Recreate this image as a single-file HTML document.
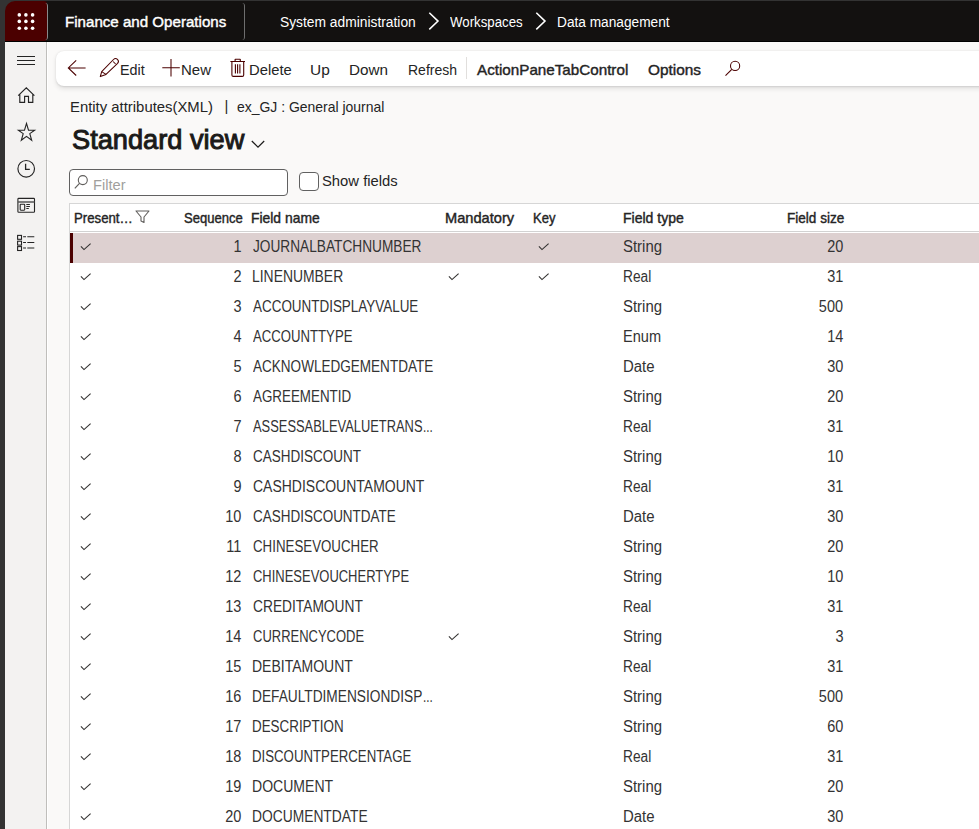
<!DOCTYPE html>
<html><head><meta charset="utf-8"><style>
*{box-sizing:border-box;margin:0;padding:0}
html,body{width:979px;height:829px;overflow:hidden;background:#faf9f8;font-family:"Liberation Sans",sans-serif;color:#242424}
.abs{position:absolute}
svg{position:absolute;overflow:visible}
.t{position:absolute;white-space:pre;line-height:1;transform-origin:0 0}
#frameL{left:0;top:0;width:5px;height:829px;background:#333333}
#frameT{left:0;top:0;width:979px;height:1px;background:#333333}
#hdr{left:5px;top:1px;width:974px;height:41px;background:#131110;border-bottom:1px solid #000}
#launch{left:5px;top:1px;width:42px;height:40px;background:#4b0000;border-radius:10px 3px 3px 0}
#nav{left:5px;top:42px;width:42px;height:787px;background:#f3f2f1;border-right:1px solid #bfbebb}
#ap{left:56px;top:51px;width:940px;height:35px;background:#fff;border-radius:8px;box-shadow:0 0.6px 1.8px rgba(0,0,0,0.10),0 2.4px 5px rgba(0,0,0,0.09)}
#grid{left:69px;top:203px;width:920px;height:640px;background:#fff;border-left:1px solid #d6d6d6;border-top:1px solid #d6d6d6}
#ghdr{left:70px;top:204px;width:909px;height:28px;border-bottom:1px solid #d2d2d2}
.row{position:absolute;left:70px;width:909px;height:30px}
.row.sel{background:#ddd0d0}
.row.sel:before{content:"";position:absolute;left:0;top:0;width:3px;height:30px;background:#4b0000}
.row .ck{top:10px}
.c{position:absolute;top:6.09px;font-size:15.6px;white-space:pre;line-height:1;color:#333;transform-origin:0 0}
.seq{right:737.5px;transform:scaleX(0.929);transform-origin:100% 0}
.fn{left:182.9px}
.ft{left:553.4px}
.fs{right:135.5px;transform:scaleX(0.929);transform-origin:100% 0}
</style></head><body>
<div class="abs" id="frameL"></div><div class="abs" id="frameT"></div><div class="abs" id="hdr"></div><div class="abs" style="left:5px;top:1px;width:12px;height:12px;background:#333"></div>
<div class="abs" id="launch"><svg width="42" height="40" style="left:0;top:0"><g fill="#fff">
<circle cx="14.3" cy="13.9" r="1.8"/><circle cx="20.9" cy="13.9" r="1.8"/><circle cx="27.6" cy="13.9" r="1.8"/>
<circle cx="14.3" cy="20.4" r="1.8"/><circle cx="20.9" cy="20.4" r="1.8"/><circle cx="27.6" cy="20.4" r="1.8"/>
<circle cx="14.3" cy="27.3" r="1.8"/><circle cx="20.9" cy="27.3" r="1.8"/><circle cx="27.6" cy="27.3" r="1.8"/></g></svg></div>
<div class="t" style="left:65.15px;top:14.72px;font-size:14.39px;font-weight:400;-webkit-text-stroke:0.4px #fff;color:#fff;transform:scaleX(1.051);">Finance and Operations</div>
<div class="abs" style="left:240px;top:2.5px;width:5px;height:37.5px;border-right:1px solid #6e6e6e;border-radius:0 3px 3px 0"></div>
<div class="abs" style="left:43px;top:2.5px;width:5px;height:37px;border-right:1px solid #8a8a8a;border-radius:0 3px 3px 0"></div>
<div class="t" style="left:279.62px;top:14.56px;font-size:14.11px;font-weight:400;-webkit-text-stroke:0px #fff;color:#fff;transform:scaleX(0.9781);">System administration</div>
<svg width="12" height="18" style="left:427.5px;top:12px"><path d="M1.3 0.8 L10 9.1 L1.3 17.4" fill="none" stroke="#fff" stroke-width="1.55"/></svg>
<div class="t" style="left:449.8px;top:14.56px;font-size:14.11px;font-weight:400;-webkit-text-stroke:0px #fff;color:#fff;transform:scaleX(0.939);">Workspaces</div>
<svg width="12" height="18" style="left:535px;top:12px"><path d="M1.3 0.8 L10 9.1 L1.3 17.4" fill="none" stroke="#fff" stroke-width="1.55"/></svg>
<div class="t" style="left:556.73px;top:14.56px;font-size:14.11px;font-weight:400;-webkit-text-stroke:0px #fff;color:#fff;transform:scaleX(0.9696);">Data management</div>
<div class="abs" id="nav"></div><div class="abs" style="left:47px;top:42px;width:1px;height:787px;background:#fff"></div>
<svg width="20" height="12" style="left:17px;top:55px"><g stroke="#242424" stroke-width="1"><path d="M0 1.5H18M0 5.5H18M0 9.5H18"/></g></svg>
<svg width="20" height="20" style="left:17px;top:86px"><path d="M1.2 9.6 L9.3 1.9 L17.4 9.6 M2.8 8 V16.3 H7.6 V10.3 H11.5 V16.3 H15.8 V8" fill="none" stroke="#242424" stroke-width="1.15"/></svg>
<svg width="20" height="20" style="left:17px;top:122px"><path d="M9.5 1.4 L11.5 8.2 L17.6 8.2 L12.8 11.6 L14.7 18.3 L9.5 14.4 L4.3 18.3 L6.2 11.6 L1.4 8.2 L7.5 8.2 Z" fill="none" stroke="#242424" stroke-width="1.1" stroke-linejoin="miter"/></svg>
<svg width="20" height="20" style="left:17px;top:159px"><circle cx="9.2" cy="9.8" r="8.3" fill="none" stroke="#242424" stroke-width="1.15"/><path d="M8.6 4.8 V10.4 H12.8" fill="none" stroke="#242424" stroke-width="1.3"/></svg>
<svg width="20" height="18" style="left:17px;top:197px"><rect x="0.9" y="1.4" width="16.6" height="13.9" rx="0.8" fill="none" stroke="#242424" stroke-width="1.1"/><path d="M1 5H17.5" stroke="#555" stroke-width="1.5"/><rect x="3.2" y="7.3" width="4.5" height="5.9" rx="0.6" fill="none" stroke="#242424" stroke-width="1.1"/><path d="M9.3 7.5H12.9M9.3 9.5H12.9M9.3 11.5H11.8" stroke="#242424" stroke-width="1"/></svg>
<svg width="20" height="18" style="left:17px;top:234px"><g fill="none" stroke="#242424" stroke-width="1.1"><rect x="0.6" y="1.4" width="3.9" height="3.9"/><rect x="0.6" y="7.2" width="3.9" height="3.9"/><rect x="0.6" y="12.6" width="3.9" height="3.9"/><path d="M6.1 2.7H9M10.3 2.7H17.3M6.1 8.5H9M10.3 8.5H17.3M6.1 14H9M10.3 14H17.3"/></g></svg>
<div class="abs" id="ap"></div>
<svg width="20" height="16" style="left:67px;top:60px"><path d="M9.2 0.3 L1.3 7.9 L9.2 15.5 M1.3 7.9 H18.6" fill="none" stroke="#4b0000" stroke-width="1.05"/></svg>
<svg width="26" height="26" style="left:95px;top:54px"><path d="M6.7 17.6 L5.3 22.6 L11 20.4 Z M6.7 17.6 L18.5 5.5 A2.83 2.83 0 0 1 22.6 9.4 L11 20.4 M18.1 7.5 L20.6 10" fill="none" stroke="#4b0000" stroke-width="1.05" stroke-linejoin="round"/></svg>
<div class="t" style="left:119.94px;top:62.75px;font-size:14.94px;font-weight:400;-webkit-text-stroke:0px #242424;color:#242424;transform:scaleX(0.96);">Edit</div>
<svg width="20" height="20" style="left:162px;top:58px"><path d="M9 1 V18.5 M0.3 9.8 H17.8" fill="none" stroke="#4b0000" stroke-width="1.05"/></svg>
<div class="t" style="left:181.2px;top:62.75px;font-size:14.94px;font-weight:400;-webkit-text-stroke:0px #242424;color:#242424;transform:scaleX(1.0034);">New</div>
<svg width="24" height="26" style="left:226px;top:54px"><path d="M4.4 7.5 H19 M9.1 7.5 V5.6 Q9.1 5.3 9.4 5.3 H14 Q14.3 5.3 14.3 5.6 V7.5 M5.9 7.5 V21 Q5.9 22.4 7.3 22.4 H16.3 Q17.7 22.4 17.7 21 V7.5 M9.4 10.3 V19.6 M11.6 10.3 V19.6 M13.9 10.3 V19.6" fill="none" stroke="#4b0000" stroke-width="1.1"/></svg>
<div class="t" style="left:248.61px;top:62.75px;font-size:14.94px;font-weight:400;-webkit-text-stroke:0px #242424;color:#242424;transform:scaleX(0.9905);">Delete</div>
<div class="t" style="left:310.47px;top:62.75px;font-size:14.94px;font-weight:400;-webkit-text-stroke:0px #242424;color:#242424;transform:scaleX(1.0333);">Up</div>
<div class="t" style="left:349.28px;top:62.75px;font-size:14.94px;font-weight:400;-webkit-text-stroke:0px #242424;color:#242424;transform:scaleX(1.0216);">Down</div>
<div class="t" style="left:407.66px;top:62.75px;font-size:14.94px;font-weight:400;-webkit-text-stroke:0px #242424;color:#242424;transform:scaleX(0.9373);">Refresh</div>
<div class="abs" style="left:466px;top:57px;width:1px;height:22px;background:#e1dfdd"></div>
<div class="t" style="left:476.7px;top:62.75px;font-size:14.94px;font-weight:400;-webkit-text-stroke:0.4px #242424;color:#242424;transform:scaleX(1.0176);">ActionPaneTabControl</div>
<div class="t" style="left:647.8px;top:62.75px;font-size:14.94px;font-weight:400;-webkit-text-stroke:0.4px #242424;color:#242424;transform:scaleX(1.0308);">Options</div>
<svg width="26" height="24" style="left:720px;top:56px"><circle cx="15.1" cy="9.9" r="4.6" fill="none" stroke="#4b0000" stroke-width="1.05"/><path d="M11.8 13.3 L5.5 19.6" stroke="#4b0000" stroke-width="1.1"/></svg>
<div class="t" style="left:70.2px;top:99.87px;font-size:14.8px;font-weight:400;-webkit-text-stroke:0px #242424;color:#242424;transform:scaleX(1.005);">Entity attributes(XML)</div>
<div class="t" style="left:224.6px;top:99.27px;font-size:14.8px;color:#242424">|</div>
<div class="t" style="left:237.0px;top:99.87px;font-size:14.8px;font-weight:400;-webkit-text-stroke:0px #242424;color:#242424;transform:scaleX(0.9429);">ex_GJ : General journal</div>
<div class="t" style="left:71.9px;top:126.18px;font-size:27.79px;font-weight:400;-webkit-text-stroke:1.0px #1b1a19;color:#1b1a19;transform:scaleX(0.9791);">Standard view</div>
<svg width="16" height="10" style="left:251px;top:140px"><path d="M0.8 1 L7 7.2 L13.2 1" fill="none" stroke="#1b1a19" stroke-width="1.2"/></svg>
<div class="abs" style="left:69px;top:169px;width:219px;height:27px;background:#fff;border:1px solid #616161;border-radius:4px"></div>
<svg width="16" height="16" style="left:74px;top:175px"><circle cx="8.8" cy="5.1" r="4.5" fill="none" stroke="#605e5c" stroke-width="1.1"/><path d="M5.5 8.4 L0.8 13.4" stroke="#605e5c" stroke-width="1.2"/></svg>
<div class="t" style="left:92.97px;top:178.04px;font-size:14.25px;font-weight:400;-webkit-text-stroke:0px #a19f9d;color:#a19f9d;transform:scaleX(1.029);">Filter</div>
<div class="abs" style="left:299px;top:172px;width:20px;height:19px;background:#fff;border:1px solid #616161;border-radius:4px"></div>
<div class="t" style="left:322.25px;top:174.16px;font-size:14.11px;font-weight:400;-webkit-text-stroke:0px #242424;color:#242424;transform:scaleX(1.0493);">Show fields</div>
<div class="abs" id="grid"></div><div class="abs" id="ghdr"></div>
<div class="t" style="left:73.56px;top:210.76px;font-size:13.99px;font-weight:400;-webkit-text-stroke:0.4px #242424;color:#242424;transform:scaleX(0.945);">Present…</div>
<div class="t" style="left:183.9px;top:210.76px;font-size:13.99px;font-weight:400;-webkit-text-stroke:0.4px #242424;color:#242424;transform:scaleX(0.9333);">Sequence</div>
<div class="t" style="left:250.91px;top:210.76px;font-size:13.99px;font-weight:400;-webkit-text-stroke:0.4px #242424;color:#242424;transform:scaleX(0.9926);">Field name</div>
<div class="t" style="left:444.85px;top:210.76px;font-size:13.99px;font-weight:400;-webkit-text-stroke:0.4px #242424;color:#242424;transform:scaleX(1.0462);">Mandatory</div>
<div class="t" style="left:533.47px;top:210.76px;font-size:13.99px;font-weight:400;-webkit-text-stroke:0.4px #242424;color:#242424;transform:scaleX(0.9304);">Key</div>
<div class="t" style="left:622.6px;top:210.76px;font-size:13.99px;font-weight:400;-webkit-text-stroke:0.4px #242424;color:#242424;transform:scaleX(1.0017);">Field type</div>
<div class="t" style="left:787.33px;top:210.76px;font-size:13.99px;font-weight:400;-webkit-text-stroke:0.4px #242424;color:#242424;transform:scaleX(0.969);">Field size</div>
<svg width="16" height="14" style="left:135px;top:210px"><path d="M1 1 H14 L9 7 V12.5 L6 11 V7 Z" fill="none" stroke="#605e5c" stroke-width="1.1" stroke-linejoin="round"/></svg>
<div class="row sel" style="top:233px"><svg class="ck" width="12" height="9" style="left:10.4px"><path d="M0.9 3.4 L4 6.6 L10.6 0.6" fill="none" stroke="#323130" stroke-width="1.1"/></svg><span class="c seq">1</span><span class="c fn" style="left:182.9px;transform:scaleX(0.8771)">JOURNALBATCHNUMBER</span><svg class="ck" width="12" height="9" style="left:468px"><path d="M0.9 3.4 L4 6.6 L10.6 0.6" fill="none" stroke="#323130" stroke-width="1.1"/></svg><span class="c ft" style="transform:scaleX(0.9577)">String</span><span class="c fs">20</span></div>
<div class="row" style="top:263px"><svg class="ck" width="12" height="9" style="left:10.4px"><path d="M0.9 3.4 L4 6.6 L10.6 0.6" fill="none" stroke="#323130" stroke-width="1.1"/></svg><span class="c seq">2</span><span class="c fn" style="left:181.97px;transform:scaleX(0.8918)">LINENUMBER</span><svg class="ck" width="12" height="9" style="left:378px"><path d="M0.9 3.4 L4 6.6 L10.6 0.6" fill="none" stroke="#323130" stroke-width="1.1"/></svg><svg class="ck" width="12" height="9" style="left:468px"><path d="M0.9 3.4 L4 6.6 L10.6 0.6" fill="none" stroke="#323130" stroke-width="1.1"/></svg><span class="c ft" style="transform:scaleX(0.8811)">Real</span><span class="c fs">31</span></div>
<div class="row" style="top:293px"><svg class="ck" width="12" height="9" style="left:10.4px"><path d="M0.9 3.4 L4 6.6 L10.6 0.6" fill="none" stroke="#323130" stroke-width="1.1"/></svg><span class="c seq">3</span><span class="c fn" style="left:182.9px;transform:scaleX(0.8619)">ACCOUNTDISPLAYVALUE</span><span class="c ft" style="transform:scaleX(0.9577)">String</span><span class="c fs">500</span></div>
<div class="row" style="top:323px"><svg class="ck" width="12" height="9" style="left:10.4px"><path d="M0.9 3.4 L4 6.6 L10.6 0.6" fill="none" stroke="#323130" stroke-width="1.1"/></svg><span class="c seq">4</span><span class="c fn" style="left:182.9px;transform:scaleX(0.8441)">ACCOUNTTYPE</span><span class="c ft" style="transform:scaleX(0.9337)">Enum</span><span class="c fs">14</span></div>
<div class="row" style="top:353px"><svg class="ck" width="12" height="9" style="left:10.4px"><path d="M0.9 3.4 L4 6.6 L10.6 0.6" fill="none" stroke="#323130" stroke-width="1.1"/></svg><span class="c seq">5</span><span class="c fn" style="left:182.9px;transform:scaleX(0.8681)">ACKNOWLEDGEMENTDATE</span><span class="c ft" style="transform:scaleX(0.9577)">Date</span><span class="c fs">30</span></div>
<div class="row" style="top:383px"><svg class="ck" width="12" height="9" style="left:10.4px"><path d="M0.9 3.4 L4 6.6 L10.6 0.6" fill="none" stroke="#323130" stroke-width="1.1"/></svg><span class="c seq">6</span><span class="c fn" style="left:182.9px;transform:scaleX(0.8584)">AGREEMENTID</span><span class="c ft" style="transform:scaleX(0.9577)">String</span><span class="c fs">20</span></div>
<div class="row" style="top:413px"><svg class="ck" width="12" height="9" style="left:10.4px"><path d="M0.9 3.4 L4 6.6 L10.6 0.6" fill="none" stroke="#323130" stroke-width="1.1"/></svg><span class="c seq">7</span><span class="c fn" style="left:182.9px;transform:scaleX(0.8263)">ASSESSABLEVALUETRANS</span><span class="c" style="left:353px;transform:scaleX(0.75)">...</span><span class="c ft" style="transform:scaleX(0.8811)">Real</span><span class="c fs">31</span></div>
<div class="row" style="top:443px"><svg class="ck" width="12" height="9" style="left:10.4px"><path d="M0.9 3.4 L4 6.6 L10.6 0.6" fill="none" stroke="#323130" stroke-width="1.1"/></svg><span class="c seq">8</span><span class="c fn" style="left:182.9px;transform:scaleX(0.8651)">CASHDISCOUNT</span><span class="c ft" style="transform:scaleX(0.9577)">String</span><span class="c fs">10</span></div>
<div class="row" style="top:473px"><svg class="ck" width="12" height="9" style="left:10.4px"><path d="M0.9 3.4 L4 6.6 L10.6 0.6" fill="none" stroke="#323130" stroke-width="1.1"/></svg><span class="c seq">9</span><span class="c fn" style="left:182.9px;transform:scaleX(0.8965)">CASHDISCOUNTAMOUNT</span><span class="c ft" style="transform:scaleX(0.8811)">Real</span><span class="c fs">31</span></div>
<div class="row" style="top:503px"><svg class="ck" width="12" height="9" style="left:10.4px"><path d="M0.9 3.4 L4 6.6 L10.6 0.6" fill="none" stroke="#323130" stroke-width="1.1"/></svg><span class="c seq">10</span><span class="c fn" style="left:182.9px;transform:scaleX(0.8643)">CASHDISCOUNTDATE</span><span class="c ft" style="transform:scaleX(0.9577)">Date</span><span class="c fs">30</span></div>
<div class="row" style="top:533px"><svg class="ck" width="12" height="9" style="left:10.4px"><path d="M0.9 3.4 L4 6.6 L10.6 0.6" fill="none" stroke="#323130" stroke-width="1.1"/></svg><span class="c seq">11</span><span class="c fn" style="left:182.9px;transform:scaleX(0.853)">CHINESEVOUCHER</span><span class="c ft" style="transform:scaleX(0.9577)">String</span><span class="c fs">20</span></div>
<div class="row" style="top:563px"><svg class="ck" width="12" height="9" style="left:10.4px"><path d="M0.9 3.4 L4 6.6 L10.6 0.6" fill="none" stroke="#323130" stroke-width="1.1"/></svg><span class="c seq">12</span><span class="c fn" style="left:182.9px;transform:scaleX(0.8316)">CHINESEVOUCHERTYPE</span><span class="c ft" style="transform:scaleX(0.9577)">String</span><span class="c fs">10</span></div>
<div class="row" style="top:593px"><svg class="ck" width="12" height="9" style="left:10.4px"><path d="M0.9 3.4 L4 6.6 L10.6 0.6" fill="none" stroke="#323130" stroke-width="1.1"/></svg><span class="c seq">13</span><span class="c fn" style="left:182.9px;transform:scaleX(0.8828)">CREDITAMOUNT</span><span class="c ft" style="transform:scaleX(0.8811)">Real</span><span class="c fs">31</span></div>
<div class="row" style="top:623px"><svg class="ck" width="12" height="9" style="left:10.4px"><path d="M0.9 3.4 L4 6.6 L10.6 0.6" fill="none" stroke="#323130" stroke-width="1.1"/></svg><span class="c seq">14</span><span class="c fn" style="left:182.9px;transform:scaleX(0.8325)">CURRENCYCODE</span><svg class="ck" width="12" height="9" style="left:378px"><path d="M0.9 3.4 L4 6.6 L10.6 0.6" fill="none" stroke="#323130" stroke-width="1.1"/></svg><span class="c ft" style="transform:scaleX(0.9577)">String</span><span class="c fs">3</span></div>
<div class="row" style="top:653px"><svg class="ck" width="12" height="9" style="left:10.4px"><path d="M0.9 3.4 L4 6.6 L10.6 0.6" fill="none" stroke="#323130" stroke-width="1.1"/></svg><span class="c seq">15</span><span class="c fn" style="left:181.96px;transform:scaleX(0.8977)">DEBITAMOUNT</span><span class="c ft" style="transform:scaleX(0.8811)">Real</span><span class="c fs">31</span></div>
<div class="row" style="top:683px"><svg class="ck" width="12" height="9" style="left:10.4px"><path d="M0.9 3.4 L4 6.6 L10.6 0.6" fill="none" stroke="#323130" stroke-width="1.1"/></svg><span class="c seq">16</span><span class="c fn" style="left:181.98px;transform:scaleX(0.8786)">DEFAULTDIMENSIONDISP</span><span class="c" style="left:353px;transform:scaleX(0.75)">...</span><span class="c ft" style="transform:scaleX(0.9577)">String</span><span class="c fs">500</span></div>
<div class="row" style="top:713px"><svg class="ck" width="12" height="9" style="left:10.4px"><path d="M0.9 3.4 L4 6.6 L10.6 0.6" fill="none" stroke="#323130" stroke-width="1.1"/></svg><span class="c seq">17</span><span class="c fn" style="left:182.0px;transform:scaleX(0.8591)">DESCRIPTION</span><span class="c ft" style="transform:scaleX(0.9577)">String</span><span class="c fs">60</span></div>
<div class="row" style="top:743px"><svg class="ck" width="12" height="9" style="left:10.4px"><path d="M0.9 3.4 L4 6.6 L10.6 0.6" fill="none" stroke="#323130" stroke-width="1.1"/></svg><span class="c seq">18</span><span class="c fn" style="left:182.01px;transform:scaleX(0.8485)">DISCOUNTPERCENTAGE</span><span class="c ft" style="transform:scaleX(0.8811)">Real</span><span class="c fs">31</span></div>
<div class="row" style="top:773px"><svg class="ck" width="12" height="9" style="left:10.4px"><path d="M0.9 3.4 L4 6.6 L10.6 0.6" fill="none" stroke="#323130" stroke-width="1.1"/></svg><span class="c seq">19</span><span class="c fn" style="left:181.96px;transform:scaleX(0.9002)">DOCUMENT</span><span class="c ft" style="transform:scaleX(0.9577)">String</span><span class="c fs">20</span></div>
<div class="row" style="top:803px"><svg class="ck" width="12" height="9" style="left:10.4px"><path d="M0.9 3.4 L4 6.6 L10.6 0.6" fill="none" stroke="#323130" stroke-width="1.1"/></svg><span class="c seq">20</span><span class="c fn" style="left:181.98px;transform:scaleX(0.8859)">DOCUMENTDATE</span><span class="c ft" style="transform:scaleX(0.9577)">Date</span><span class="c fs">30</span></div>
</body></html>
